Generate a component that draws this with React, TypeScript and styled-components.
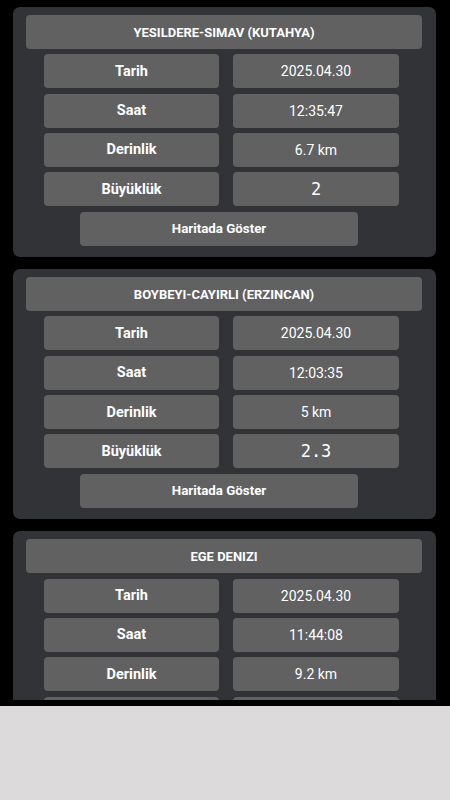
import React from 'react';
import styled, { createGlobalStyle } from 'styled-components';

const GlobalStyle = createGlobalStyle`
	html, body {
		margin: 0;
		padding: 0;
		background: #dcdada;
	}
	body {
		font-family: Roboto, 'Noto Sans', sans-serif;
		color: #fff;
	}
`;

type Quake = {
	place: string;
	date: string;
	time: string;
	depth: string;
	magnitude: string;
};

const quakes: Quake[] = [
	{ place: 'YESILDERE-SIMAV (KUTAHYA)', date: '2025.04.30', time: '12:35:47', depth: '6.7 km', magnitude: '2' },
	{ place: 'BOYBEYI-CAYIRLI (ERZINCAN)', date: '2025.04.30', time: '12:03:35', depth: '5 km', magnitude: '2.3' },
	{ place: 'EGE DENIZI', date: '2025.04.30', time: '11:44:08', depth: '9.2 km', magnitude: '2.1' },
];

function QuakeCard({ quake }: { quake: Quake }) {
	return (
		<Card>
			<Title>{quake.place}</Title>
			<Row>
				<Label>Tarih</Label>
				<Value>{quake.date}</Value>
			</Row>
			<Row>
				<Label>Saat</Label>
				<Value>{quake.time}</Value>
			</Row>
			<Row>
				<Label>Derinlik</Label>
				<Value>{quake.depth}</Value>
			</Row>
			<Row>
				<Label>Büyüklük</Label>
				<Value $mono>{quake.magnitude}</Value>
			</Row>
			<MapButton>Haritada Göster</MapButton>
		</Card>
	);
}

export default function App() {
	return (
		<>
			<GlobalStyle />
			<Screen>
				<List>
					{quakes.map((q) => (
						<QuakeCard key={q.place} quake={q} />
					))}
				</List>
			</Screen>
		</>
	);
}

// black app area, the system bar below it stays light grey
const Screen = styled.div`
	height: 706px;
	background: #000;
	overflow: hidden;
`;

const List = styled.div`
	height: 700px;
	overflow: hidden;
	padding: 7px 14px 0 13px;
	box-sizing: border-box;
	display: flex;
	flex-direction: column;
	gap: 12.5px;
`;

const Card = styled.div`
	flex-shrink: 0;
	background: #323336;
	border-radius: 7px;
	padding: 8px 14px 11px 13px;
	display: flex;
	flex-direction: column;
	gap: 5.33px;
`;

const Box = styled.div`
	height: 34px;
	background: #616161;
	border-radius: 4px;
	display: flex;
	align-items: center;
	justify-content: center;
	color: #fff;
	white-space: nowrap;
`;

const Title = styled(Box)`
	font-size: 13px;
	font-weight: 700;
`;

const Row = styled.div`
	display: grid;
	grid-template-columns: 175px 166px;
	gap: 14px;
	margin-left: 18px;
`;

const Label = styled(Box)`
	font-size: 14.5px;
	font-weight: 700;
`;

const Value = styled(Box)<{ $mono?: boolean }>`
	font-size: ${(p) => (p.$mono ? '17px' : '14px')};
	font-family: ${(p) => (p.$mono ? "'DejaVu Sans Mono', monospace" : 'inherit')};
`;

const MapButton = styled(Box)`
	width: 278px;
	margin-left: 54px;
	font-size: 13.3px;
	font-weight: 700;
`;
